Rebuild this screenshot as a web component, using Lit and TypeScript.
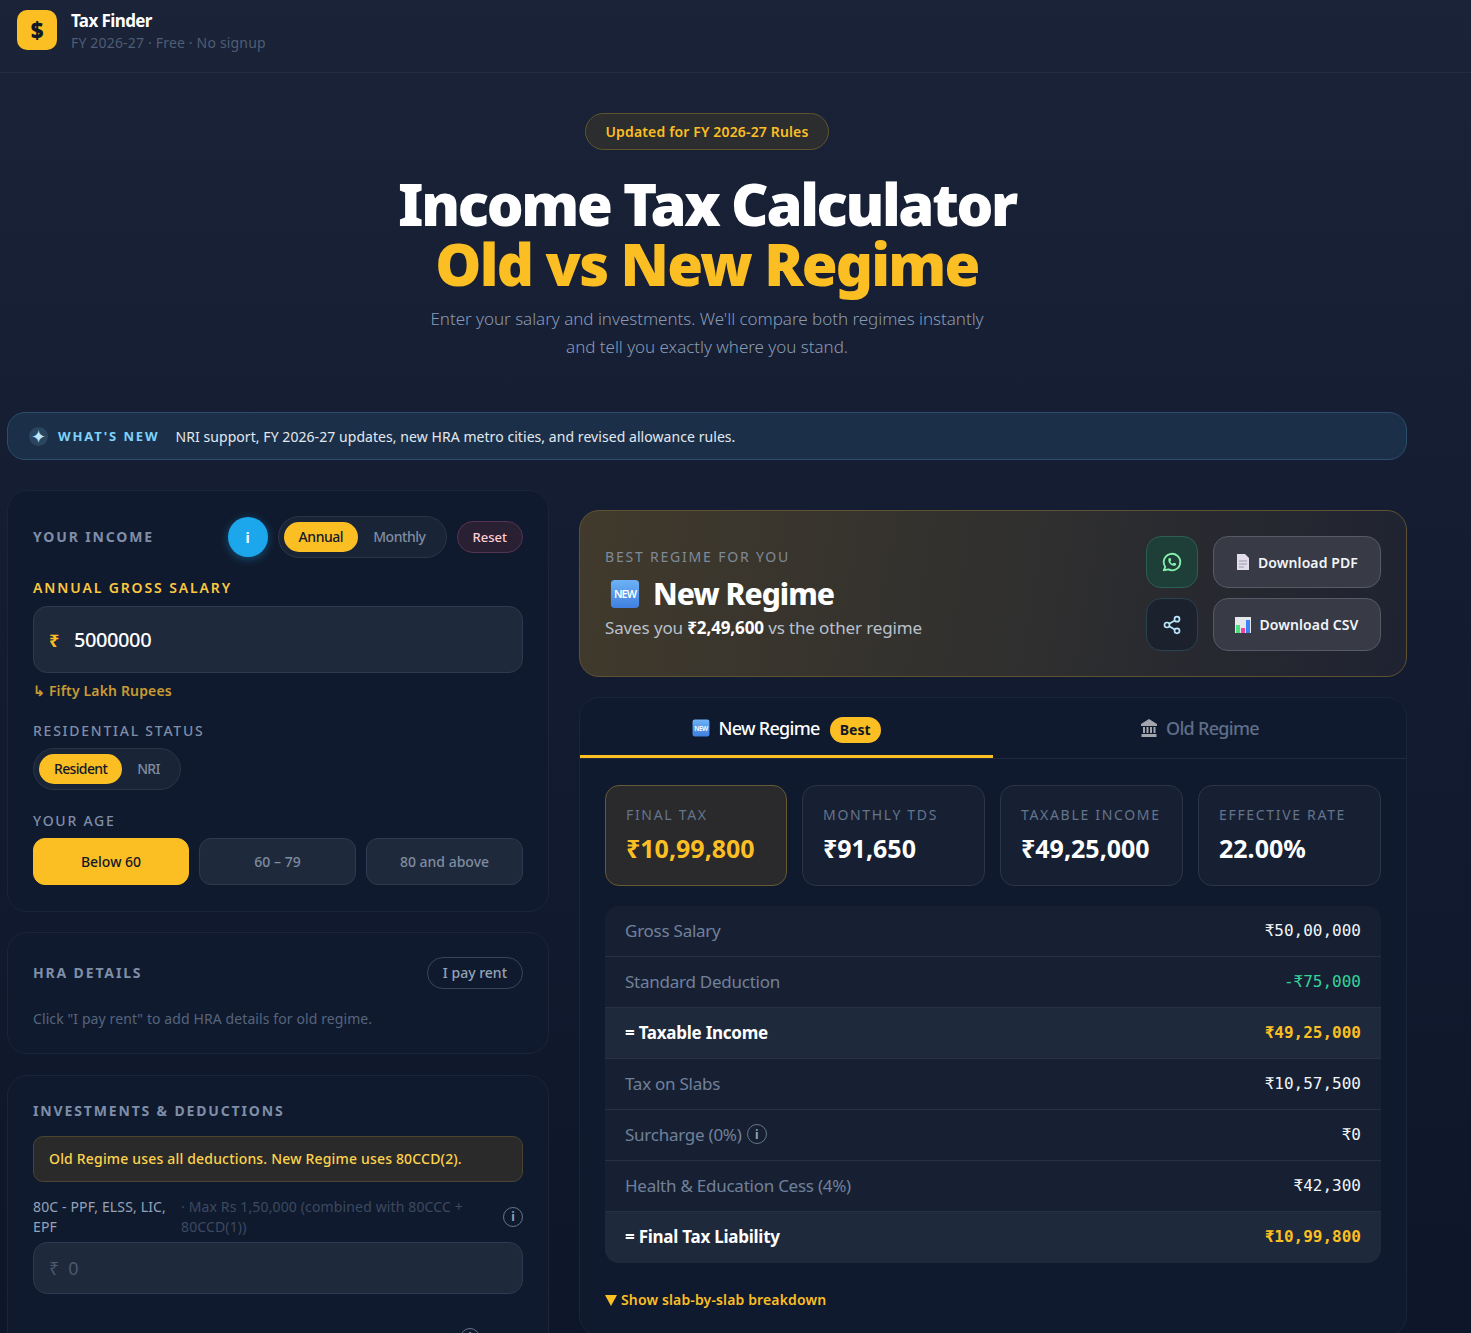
import { LitElement, html, css } from "lit";
import { customElement } from "lit/decorators.js";

const stats = [
  { label: "FINAL TAX", value: "₹10,99,800", hot: true },
  { label: "MONTHLY TDS", value: "₹91,650" },
  { label: "TAXABLE INCOME", value: "₹49,25,000" },
  { label: "EFFECTIVE RATE", value: "22.00%" },
];

const rows = [
  { label: "Gross Salary", value: "₹50,00,000" },
  { label: "Standard Deduction", value: "-₹75,000", kind: "green" },
  { label: "= Taxable Income", value: "₹49,25,000", kind: "total" },
  { label: "Tax on Slabs", value: "₹10,57,500" },
  { label: "Surcharge (0%)", value: "₹0", info: true },
  { label: "Health & Education Cess (4%)", value: "₹42,300" },
  { label: "= Final Tax Liability", value: "₹10,99,800", kind: "total" },
];

const newIcon = (size: number) => html`
  <svg width=${size} height=${size} viewBox="0 0 32 32" class="emoji">
    <defs>
      <linearGradient id="newfill" x1="0" y1="0" x2="0" y2="1">
        <stop offset="0" stop-color="#6db2f5"></stop>
        <stop offset="1" stop-color="#3f80e0"></stop>
      </linearGradient>
    </defs>
    <rect x="1" y="1" width="30" height="30" rx="4" fill="url(#newfill)"></rect>
    <text x="16" y="20.500" text-anchor="middle" font-size="11.500" font-weight="600" fill="#fff" font-family="Noto Sans, sans-serif">NEW</text>
  </svg>`;

const infoIcon = html`<span class="tip">i</span>`;

@customElement("app-root")
export class AppRoot extends LitElement {
  static styles = css`
    :host {
      display: block;
      min-height: 1333px;
      overflow: hidden;
      color: #f1f5f9;
      font-family: "Noto Sans", "Open Sans", sans-serif;
      background: linear-gradient(180deg, #1a2338 0%, #121b30 45%, #0d1528 100%);
    }
    * { box-sizing: border-box; }
    .emoji { display: block; flex: none; }

    .top {
      height: 73px;
      padding: 10px 17px;
      display: flex;
      gap: 14px;
      border-bottom: 1px solid #232c41;
    }
    .logo {
      width: 40px;
      height: 40px;
      border-radius: 10px;
      background: #fbbf24;
      color: #111827;
      font-weight: 900;
      font-size: 22px;
      display: flex;
      align-items: center;
      justify-content: center;
    }
    .brand { margin-top: 1px; font-size: 17px; font-weight: 700; line-height: 20px; letter-spacing: -0.6px; color: #fff; }
    .sub { margin-top: 2px; font-size: 14px; line-height: 20px; letter-spacing: 0.18px; color: #4f5d75; }

    .hero { width: 1414px; padding-top: 40px; display: flex; flex-direction: column; align-items: center; }
    .pill {
      height: 37px;
      padding: 0 20px;
      border-radius: 19px;
      display: flex;
      align-items: center;
      font-size: 14px;
      font-weight: 600;
      letter-spacing: 0.15px;
      color: #fbbf24;
      background: #2c2d2e;
      border: 1px solid #62552d;
    }
    h1 {
      margin: 24px 0 0;
      font-size: 58px;
      line-height: 60px;
      font-weight: 900;
      letter-spacing: -2.35px;
      text-align: center;
      color: #fff;
    }
    h1 span { display: block; letter-spacing: -1.8px; color: #fbbf24; }
    .lead { margin: 11px 0 0; width: 570px; text-align: center; font-size: 17px; font-weight: 300; line-height: 28px; letter-spacing: -0.03px; color: #8a9ab3; }

    .wrap { width: 1400px; margin-left: 7px; }
    .news {
      margin-top: 51px;
      height: 48px;
      padding: 0 21px;
      display: flex;
      align-items: center;
      border: 1px solid #2b4e6a;
      border-radius: 18px;
      background: #1b3048;
      font-size: 14px;
      letter-spacing: 0.06px;
      color: #e2e8f0;
    }
    .spark {
      width: 19px;
      height: 19px;
      border-radius: 50%;
      background: #2b4560;
      color: #bae6fd;
      font-size: 18px;
      display: flex;
      align-items: center;
      justify-content: center;
    }
    .news b { margin: 0 16px 0 10px; color: #7dd3fc; font-size: 13px; letter-spacing: 1.9px; font-weight: 700; }

    .cols { margin-top: 30px; display: grid; grid-template-columns: 542px 828px; gap: 30px; align-items: start; }
    .left { display: flex; flex-direction: column; gap: 20px; }
    .card {
      background: #101a2e;
      border: 1px solid #1a2539;
      border-radius: 20px;
      padding: 25px;
    }
    .income { padding-bottom: 26px; }
    .hra { padding-top: 24px; padding-bottom: 24px; }
    .deductions { height: 400px; margin-top: 1px; }
    .head { display: flex; align-items: center; }
    .head .grow { flex: 1; }
    h2 { margin: 0; font-size: 14px; line-height: 20px; letter-spacing: 1.85px; font-weight: 700; color: #7f8ea8; }
    .i-btn {
      width: 40px;
      height: 40px;
      margin-right: 10px;
      border-radius: 50%;
      background: #1ca7ec;
      box-shadow: 0 2px 8px #1ca7ec66;
      color: #fff;
      font-weight: 700;
      font-size: 14px;
      display: flex;
      align-items: center;
      justify-content: center;
    }
    .seg {
      display: inline-flex;
      align-items: center;
      height: 42px;
      padding: 0 5px;
      border: 1px solid #2b3549;
      border-radius: 21px;
      background: #1a2437;
      font-size: 14px;
      letter-spacing: -0.45px;
      color: #7f8ca1;
      font-weight: 500;
    }
    .seg span { padding: 0 15px; height: 30px; line-height: 30px; border-radius: 15px; }
    .seg .on { background: #fbbf24; color: #111827; }
    .seg.status { margin-top: 7px; letter-spacing: -0.65px; }
    .reset {
      margin-left: 10px;
      height: 32px;
      padding: 0 15px;
      border-radius: 16px;
      border: 1px solid #543450;
      background: #2a2034;
      color: #fecdd3;
      font-size: 13px;
      font-weight: 500;
      line-height: 30px;
    }
    .label { font-size: 14px; line-height: 20px; letter-spacing: 1.75px; font-weight: 500; color: #7f8ea8; }
    .label.gold { margin-top: 20px; letter-spacing: 1.87px; color: #fcc740; font-weight: 600; }
    .label.res { margin-top: 20px; }
    .label.age { margin-top: 21px; }
    .field {
      margin-top: 8px;
      height: 67px;
      border-radius: 14px;
      border: 1px solid #2e3a50;
      background: #1e293b;
      padding: 0 15px;
      display: flex;
      align-items: center;
      gap: 15px;
      font-size: 20px;
      font-weight: 500;
      letter-spacing: -0.4px;
      color: #fff;
    }
    .field em { font-style: normal; color: #fbbf24; font-size: 18px; font-weight: 700; }
    .words { margin-top: 8px; font-size: 14px; line-height: 20px; letter-spacing: 0.15px; font-weight: 600; color: #c99a32; }
    .ages { margin-top: 7px; display: grid; grid-template-columns: 156px 157px 157px; gap: 10px; }
    .ages div {
      height: 47px;
      line-height: 45px;
      text-align: center;
      border-radius: 12px;
      border: 1px solid #2e3a50;
      background: #1e293b;
      font-size: 14px;
      font-weight: 500;
      color: #7f8ca1;
    }
    .ages .on { background: #fbbf24; border-color: #fbbf24; color: #111827; }
    .rent {
      height: 32px;
      padding: 0 15px;
      border: 1px solid #3a4558;
      border-radius: 16px;
      font-size: 14px;
      line-height: 30px;
      font-weight: 500;
      color: #94a3b8;
    }
    .hint { margin-top: 20px; font-size: 14px; line-height: 20px; letter-spacing: 0.1px; color: #56647c; }
    .notice {
      margin-top: 15px;
      height: 46px;
      line-height: 44px;
      padding: 0 15px;
      border: 1px solid #4a452f;
      border-radius: 10px;
      background: #2a2a2a;
      color: #fcd34d;
      font-size: 14px;
      font-weight: 500;
      letter-spacing: 0.18px;
    }
    .ded { margin-top: 15px; display: flex; align-items: center; font-size: 14px; line-height: 20px; letter-spacing: 0.14px; }
    .ded .name { width: 148px; color: #94a3b8; }
    .ded .max { flex: 1; color: #3c4960; }
    .ded.next { margin-top: 34px; padding-right: 43px; justify-content: flex-end; }
    .tip {
      flex: none;
      display: inline-flex;
      align-items: center;
      justify-content: center;
      width: 20px;
      height: 20px;
      border: 1px solid #64748b;
      border-radius: 50%;
      color: #94a3b8;
      font-size: 12px;
      font-weight: 700;
    }
    .field.small { height: 52px; margin-top: 5px; gap: 9px; font-size: 18px; font-weight: 400; letter-spacing: 0; color: #4b586e; }
    .field.small em { font-weight: 400; color: #4b586e; font-size: 18px; }

    .best {
      height: 167px;
      margin-top: 20px;
      padding: 0 25px;
      border: 1px solid #5e5232;
      border-radius: 20px;
      background: linear-gradient(100deg, #413a2c 0%, #2f2f2f 55%, #1f2231 100%);
      display: flex;
      align-items: center;
    }
    .best .grow { flex: 1; padding-top: 2px; }
    .eyebrow { margin-top: -1px; font-size: 14px; line-height: 20px; letter-spacing: 1.8px; color: #7f8a99; }
    .winner { margin-top: 7px; display: flex; align-items: center; gap: 13px; padding-left: 5px; font-size: 30px; line-height: 40px; font-weight: 800; letter-spacing: -1px; color: #fff; }
    .saves { margin-top: 1px; font-size: 17px; line-height: 26px; letter-spacing: -0.13px; color: #b9c0cb; }
    .saves b { color: #fff; font-weight: 700; }
    .actions { display: grid; grid-template-columns: 52px 168px; grid-template-rows: 52px 53px; gap: 10px 15px; }
    .act {
      border-radius: 15px;
      border: 1px solid #565a66;
      background: #383b45;
      display: flex;
      align-items: center;
      justify-content: center;
      gap: 8px;
      font-size: 14px;
      font-weight: 600;
      letter-spacing: 0.1px;
      color: #f1f5f9;
    }
    .act.wa { background: #1d3f38; border-color: #2d5f50; }
    .act.sh { background: #1b222d; border-color: #2b4350; }

    .result { margin-top: 20px; padding: 0; height: 639px; }
    .tabs { display: grid; grid-template-columns: 1fr 1fr; height: 61px; border-bottom: 1px solid #1e293b; }
    .tab {
      display: flex;
      align-items: center;
      justify-content: center;
      gap: 8px;
      font-size: 18px;
      font-weight: 500;
      letter-spacing: -0.7px;
      color: #5f6e88;
    }
    .tab.on { color: #fff; box-shadow: inset 0 -3px 0 #fbbf24; height: 60px; }
    .best-tag {
      margin: 3px 0 0 2px;
      height: 26px;
      padding: 0 10px;
      border-radius: 13px;
      background: #fbbf24;
      color: #111827;
      font-size: 14px;
      font-weight: 700;
      line-height: 26px;
      letter-spacing: 0;
    }
    .body { padding: 26px 25px 0; }
    .stats { display: grid; grid-template-columns: 182px 183px 183px 183px; gap: 15px; }
    .stat {
      height: 101px;
      padding: 10px 20px;
      border: 1px solid #2a3549;
      border-radius: 14px;
      background: #172033;
    }
    .stat.hot { background: #2a2a2c; border-color: #665a34; }
    .stat small { display: block; margin-top: 9px; font-size: 14px; line-height: 20px; letter-spacing: 1.68px; color: #64748b; }
    .stat strong { display: block; margin-top: 7px; font-size: 25px; line-height: 32px; font-weight: 700; color: #fff; }
    .stat.hot strong { color: #fbbf24; }
    .table { margin-top: 20px; border-radius: 14px; overflow: hidden; background: #172033; }
    .row {
      height: 51px;
      padding: 0 20px 2px;
      display: flex;
      align-items: center;
      justify-content: space-between;
      border-bottom: 1px solid #263145;
      font-size: 17px;
      letter-spacing: -0.25px;
      color: #71809a;
    }
    .row:last-child { border-bottom: 0; }
    .row .lab { display: flex; align-items: center; gap: 5px; }
    .row code { font-family: "DejaVu Sans Mono", "Liberation Mono", monospace; font-size: 16px; letter-spacing: 0; color: #f1f5f9; }
    .row.green code { color: #34d399; }
    .row.total { background: #1e293b; color: #fff; font-weight: 700; }
    .row.total code { color: #fbbf24; font-weight: 700; }
    .more { margin-top: 27px; font-size: 14px; line-height: 20px; letter-spacing: 0.14px; font-weight: 600; color: #fbbf24; display: flex; gap: 4px; align-items: center; }
    .tri { width: 0; height: 0; border: 6px solid transparent; border-top: 11px solid #fbbf24; border-bottom: 0; }
  `;

  private renderIncome() {
    return html`
      <section class="card income">
        <div class="head">
          <h2 class="grow">YOUR INCOME</h2>
          <div class="i-btn">i</div>
          <div class="seg"><span class="on">Annual</span><span>Monthly</span></div>
          <div class="reset">Reset</div>
        </div>
        <div class="label gold">ANNUAL GROSS SALARY</div>
        <div class="field"><em>₹</em>5000000</div>
        <div class="words">↳ Fifty Lakh Rupees</div>
        <div class="label res">RESIDENTIAL STATUS</div>
        <div class="seg status"><span class="on">Resident</span><span>NRI</span></div>
        <div class="label age">YOUR AGE</div>
        <div class="ages"><div class="on">Below 60</div><div>60 – 79</div><div>80 and above</div></div>
      </section>`;
  }

  private renderDeductions() {
    return html`
      <section class="card deductions">
        <h2>INVESTMENTS &amp; DEDUCTIONS</h2>
        <div class="notice">Old Regime uses all deductions. New Regime uses 80CCD(2).</div>
        <div class="ded">
          <div class="name">80C - PPF, ELSS, LIC, EPF</div>
          <div class="max">· Max Rs 1,50,000 (combined with 80CCC + 80CCD(1))</div>
          ${infoIcon}
        </div>
        <div class="field small"><em>₹</em>0</div>
        <div class="ded next">${infoIcon}</div>
      </section>`;
  }

  private renderBest() {
    return html`
      <section class="best">
        <div class="grow">
          <div class="eyebrow">BEST REGIME FOR YOU</div>
          <div class="winner">${newIcon(30)}New Regime</div>
          <div class="saves">Saves you <b>₹2,49,600</b> vs the other regime</div>
        </div>
        <div class="actions">
          <div class="act wa">
            <svg width="22" height="22" viewBox="0 0 24 24" fill="none" stroke="#86efac" stroke-width="2" stroke-linecap="round" stroke-linejoin="round">
              <path d="M3 21l1.65-3.8a9 9 0 1 1 3.4 2.9L3 21"></path>
              <path d="M9 10a.5.5 0 0 0 1 0V9a.5.5 0 0 0-1 0v1a5 5 0 0 0 5 5h1a.5.5 0 0 0 0-1h-1a.5.5 0 0 0 0 1"></path>
            </svg>
          </div>
          <div class="act">
            <svg width="14" height="16" viewBox="0 0 14 16">
              <path d="M1 0h8l4 4v12H1z" fill="#e2dcec"></path>
              <path d="M3 7h8M3 10h8M3 13h5" stroke="#9b97a8"></path>
            </svg>
            Download PDF
          </div>
          <div class="act sh">
            <svg width="20" height="20" viewBox="0 0 24 24" fill="none" stroke="#bae6fd" stroke-width="2">
              <circle cx="18" cy="5" r="3"></circle><circle cx="6" cy="12" r="3"></circle><circle cx="18" cy="19" r="3"></circle>
              <path d="M8.6 13.5l6.800 4M15.400 6.500l-6.800 4"></path>
            </svg>
          </div>
          <div class="act">
            <svg width="16" height="16" viewBox="0 0 16 16">
              <rect width="16" height="16" fill="#e5e7eb"></rect>
              <rect x="1" y="8" width="4" height="8" fill="#4ade80"></rect>
              <rect x="6" y="11" width="4" height="5" fill="#ec4899"></rect>
              <rect x="11" y="3" width="4" height="13" fill="#3b82f6"></rect>
            </svg>
            Download CSV
          </div>
        </div>
      </section>`;
  }

  private renderResult() {
    return html`
      <section class="card result">
        <div class="tabs">
          <div class="tab on">${newIcon(18)}New Regime<span class="best-tag">Best</span></div>
          <div class="tab">
            <svg width="18" height="18" viewBox="0 0 18 18" fill="#a5a5ad">
              <path d="M9 0l8 5v2H1V5z"></path>
              <path d="M3 8h2v6H3zM6.500 8h2v6h-2zM10 8h2v6h-2zM13.500 8h2v6h-2zM1.500 15h15v3h-15z"></path>
            </svg>
            Old Regime
          </div>
        </div>
        <div class="body">
          <div class="stats">
            ${stats.map((s) => html`
              <div class="stat ${s.hot ? "hot" : ""}"><small>${s.label}</small><strong>${s.value}</strong></div>`)}
          </div>
          <div class="table">
            ${rows.map((r) => html`
              <div class="row ${r.kind ?? ""}">
                <span class="lab">${r.label}${r.info ? infoIcon : ""}</span>
                <code>${r.value}</code>
              </div>`)}
          </div>
          <div class="more"><span class="tri"></span>Show slab-by-slab breakdown</div>
        </div>
      </section>`;
  }

  render() {
    return html`
      <header class="top">
        <div class="logo">$</div>
        <div>
          <div class="brand">Tax Finder</div>
          <div class="sub">FY 2026-27 · Free · No signup</div>
        </div>
      </header>
      <div class="hero">
        <div class="pill">Updated for FY 2026-27 Rules</div>
        <h1>Income Tax Calculator<span>Old vs New Regime</span></h1>
        <p class="lead">Enter your salary and investments. We'll compare both regimes instantly and tell you exactly where you stand.</p>
      </div>
      <div class="wrap">
        <div class="news"><span class="spark">✦</span><b>WHAT'S NEW</b>NRI support, FY 2026-27 updates, new HRA metro cities, and revised allowance rules.</div>
        <div class="cols">
          <div class="left">
            ${this.renderIncome()}
            <section class="card hra">
              <div class="head">
                <h2 class="grow">HRA DETAILS</h2>
                <div class="rent">I pay rent</div>
              </div>
              <div class="hint">Click "I pay rent" to add HRA details for old regime.</div>
            </section>
            ${this.renderDeductions()}
          </div>
          <div>
            ${this.renderBest()}
            ${this.renderResult()}
          </div>
        </div>
      </div>
    `;
  }
}
